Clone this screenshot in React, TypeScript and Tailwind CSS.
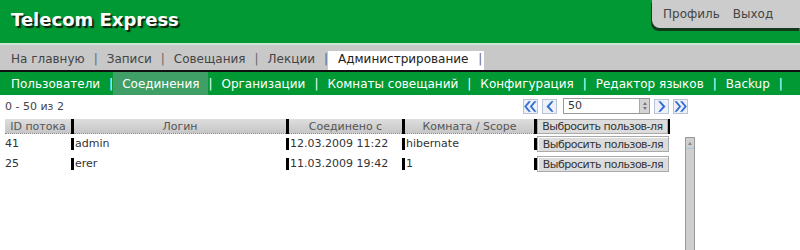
import React from 'react';

const topTabs = ['На главную', 'Записи', 'Совещания', 'Лекции'];
const subTabs = ['Пользователи', 'Соединения', 'Организации', 'Комнаты совещаний', 'Конфигурация', 'Редактор языков', 'Backup'];

const rows = [
  { id: '41', login: 'admin', since: '12.03.2009 11:22', room: 'hibernate' },
  { id: '25', login: 'erer', since: '11.03.2009 19:42', room: '1' },
];

function Chevron({ dir, double }: { dir: 'l' | 'r'; double?: boolean }) {
  const one = dir === 'l' ? 'M9 2 L4 7.5 L9 13 L11 13 L6.5 7.5 L11 2 Z' : 'M6 2 L11 7.5 L6 13 L4 13 L8.5 7.5 L4 2 Z';
  const two = dir === 'l' ? 'M5 2 L0.5 7.5 L5 13 L7 13 L2.5 7.5 L7 2 Z M11 2 L6.5 7.5 L11 13 L13 13 L8.5 7.5 L13 2 Z' : 'M9 2 L13.5 7.5 L9 13 L7 13 L11.5 7.5 L7 2 Z M3 2 L7.5 7.5 L3 13 L1 13 L5.5 7.5 L1 2 Z';
  return (
    <div className="w-[15px] h-[15px] border border-[#b8c4d8] bg-[#eef2f8] flex items-center justify-center">
      <svg width="14" height="15" viewBox="0 0 14 15">
        <path d={double ? two : one} fill="#2a6fe0" stroke="#1a50b0" strokeWidth="0.4" />
      </svg>
    </div>
  );
}

const Bar = () => <div className="w-[3px] h-[12px] bg-black shrink-0" />;

export default function App() {
  return (
    <div className="w-[800px] h-[250px] bg-white overflow-hidden font-['DejaVu_Sans',Verdana,sans-serif]">
      <div className="h-[43px] bg-[#009933] flex justify-between">
        <div className="pl-[11px] pt-[11px] text-[18px] font-bold text-white [text-shadow:2px_2px_1px_#102010] leading-none">
          Telecom Express
        </div>
        <div className="w-[148px] h-[28px] bg-[#cccccc] rounded-bl-[8px] shadow-[-1px_3px_0_#143a1e] flex items-center gap-[13px] pl-[11px] text-[12px] text-[#444]">
          <span>Профиль</span>
          <span>Выход</span>
        </div>
      </div>
      <div className="h-[2px] bg-[#cfe5d3]" />
      <div className="h-[27px] bg-[#c8c8c8] flex items-end pl-[2px] text-[12px] text-[#444] border-b-2 border-[#111] whitespace-nowrap">
        {topTabs.map((t) => (
          <React.Fragment key={t}>
            <span className="px-[9px] h-[19px] leading-[17px]">{t}</span>
            <span className="h-[19px] leading-[17px] text-[#666]">|</span>
          </React.Fragment>
        ))}
        <span className="h-[19px] leading-[17px] bg-white pl-[10px] pr-[2px] text-[#222]">
          Администрирование <span className="ml-[6px] text-[#666]">|</span>
        </span>
      </div>
      <div className="h-[23px] bg-[#009933] flex items-stretch pl-[2px] text-[12px] text-white whitespace-nowrap">
        {subTabs.map((t) => (
          <React.Fragment key={t}>
            <span className={`px-[9px] flex items-center ${t === 'Соединения' ? 'bg-[#3f9f66]' : ''}`}>{t}</span>
            <span className="flex items-center">|</span>
          </React.Fragment>
        ))}
      </div>
      <div className="w-[695px] pl-[5px] pt-[5px]">
        <div className="flex justify-between items-start h-[19px] pr-[7px]">
          <span className="text-[11px] text-[#444] leading-none mt-[1px]">0 - 50 из 2</span>
          <div className="flex items-center gap-[4px] -mt-[2px]">
            <Chevron dir="l" double />
            <Chevron dir="l" />
            <div className="ml-[2px] w-[87px] h-[16px] border border-[#999] bg-white flex items-center justify-between pl-[4px] text-[11px] text-[#333]">
              <span>50</span>
              <div className="w-[10px] h-full bg-[#d4d4d4] border-l border-[#aaa] flex flex-col items-center justify-center gap-[2px]">
                <div className="w-0 h-0 border-x-[2px] border-x-transparent border-b-[3px] border-b-[#777]" />
                <div className="w-0 h-0 border-x-[2px] border-x-transparent border-t-[3px] border-t-[#777]" />
              </div>
            </div>
            <Chevron dir="r" />
            <Chevron dir="r" double />
          </div>
        </div>
        <div className="flex h-[15px] text-[11px] text-[#555]">
          {[
            ['ID потока', 'w-[66px]'],
            ['Логин', 'w-[212px]'],
            ['Соединено с', 'w-[113px]'],
            ['Комната / Scope', 'w-[129px]'],
          ].map(([t, w], i) => (
            <React.Fragment key={t}>
              {i > 0 && <div className="w-[3px] bg-black" />}
              <div className={`${w} bg-[linear-gradient(#dedede,#c6c6c6)] border-b border-dotted border-[#888] flex items-center justify-center leading-none whitespace-nowrap`}>{t}</div>
            </React.Fragment>
          ))}
          <div className="w-[3px] bg-black" />
          <div className="w-[131px] bg-[#dcdcdc] border border-[#aaa] flex items-center justify-center text-[#333] leading-none whitespace-nowrap overflow-hidden tracking-[-0.5px]">Выбросить пользов-ля</div>
          <div className="w-[2px] bg-black" />
        </div>
        <div className="flex">
          <div className="flex flex-col">
            {rows.map((r) => (
              <div key={r.id} className="flex items-center h-[20px] text-[11px] text-[#333]">
                <div className="w-[66px]">{r.id}</div>
                <Bar />
                <div className="w-[212px] pl-[1px]">{r.login}</div>
                <Bar />
                <div className="w-[113px] pl-[1px]">{r.since}</div>
                <Bar />
                <div className="w-[129px] pl-[1px]">{r.room}</div>
                <Bar />
                <div className="w-[132px] h-[16px] bg-[#dcdcdc] border border-[#aaa] shadow-[inset_1px_1px_0_#fff] flex items-center justify-center leading-none whitespace-nowrap overflow-hidden tracking-[-0.5px]">Выбросить пользов-ля</div>
              </div>
            ))}
          </div>
          <div className="ml-[16px] mt-[3px] w-[10px] h-[115px] bg-[#cfcfcf] border border-[#999] flex flex-col">
            <div className="h-[11px] border-b border-[#9cd] flex items-center justify-center">
              <div className="w-0 h-0 border-x-[2px] border-x-transparent border-b-[3px] border-b-[#888]" />
            </div>
          </div>
        </div>
      </div>
    </div>
  );
}
